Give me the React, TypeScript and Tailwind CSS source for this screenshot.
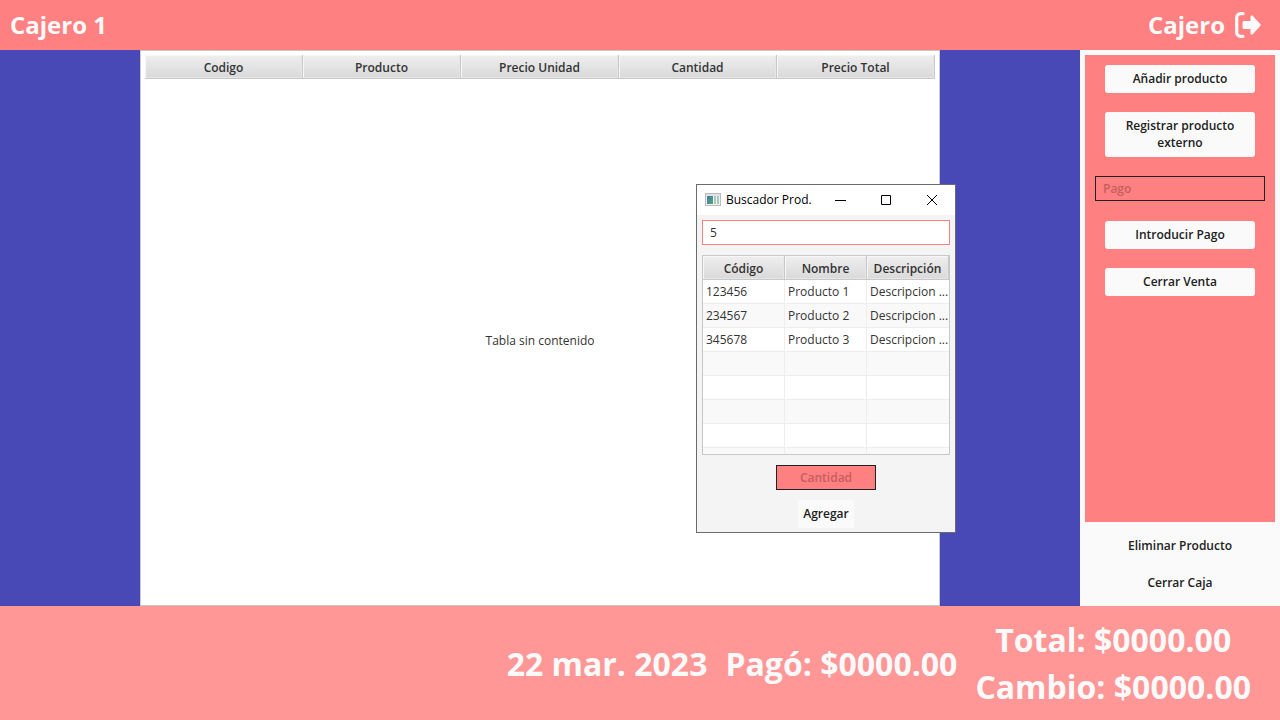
import React from "react";

const saleColumns = ["Codigo", "Producto", "Precio Unidad", "Cantidad", "Precio Total"];

const products = [
  ["123456", "Producto 1", "Descripcion ..."],
  ["234567", "Producto 2", "Descripcion ..."],
  ["345678", "Producto 3", "Descripcion ..."],
  ["", "", ""],
  ["", "", ""],
  ["", "", ""],
  ["", "", ""],
  ["", "", ""],
];

const headCell =
  "h-6 border-r border-b border-[#c8c8c8] bg-linear-to-b from-[#efefef] to-[#d9d9d9] px-0 pt-[2px] pb-0 text-center font-semibold text-[#333333] shadow-[inset_1px_1px_0_#f6f6f6,inset_-1px_-1px_0_#e6e6e6]";

const panelButton =
  "w-[150px] rounded-[3px] bg-[#fafafa] px-2 pb-[2px] text-center leading-[17px] font-semibold text-[#212121]";

function LogoutIcon() {
  return (
    <svg viewBox="0 0 26 26" className="size-[26px]" aria-hidden="true">
      <path d="M8 1.700H5.600A3.900 3.900 0 0 0 1.700 5.600v14.800A3.900 3.900 0 0 0 5.600 24.300H8" fill="none" stroke="#fafafa" strokeWidth="3.200" strokeLinecap="round" />
      <path d="M9.200 8.900h6.300V4.700c0-1.200 1.300-1.700 2.200-.9l7.600 8.100c.6.600.6 1.500 0 2.100l-7.600 8.200c-.9.800-2.200.2-2.200-.9V17H9.200c-.9 0-1.600-.7-1.600-1.600v-4.900c0-.9.700-1.600 1.600-1.600z" fill="#fafafa" />
    </svg>
  );
}

function AppIcon() {
  return (
    <svg viewBox="0 0 16 14" className="h-[14px] w-4" aria-hidden="true">
      <defs>
        <linearGradient id="pane" x1="0" y1="0" x2="1" y2="1">
          <stop offset="0" stopColor="#4a78a8" />
          <stop offset="1" stopColor="#4fa876" />
        </linearGradient>
      </defs>
      <rect x="0.500" y="0.500" width="15" height="12" fill="#f1f1f1" stroke="#b9bcbf" />
      <rect x="1" y="1" width="14" height="2" fill="#dfe3e6" />
      <rect x="2" y="3" width="6" height="8" fill="url(#pane)" />
      <rect x="9" y="3" width="2" height="8" fill="#a9c9bd" />
      <rect x="12" y="3" width="2" height="8" fill="#a9c9bd" />
    </svg>
  );
}

function SearchWindow() {
  return (
    <section
      aria-label="Buscador Prod."
      className="absolute top-[184px] left-[696px] w-[260px] border border-[#6b6b6b] bg-[#f4f4f4]"
    >
      <div className="flex h-[30px] items-center bg-white pl-2 text-black">
        <AppIcon />
        <h2 className="flex-1 pl-[5px] whitespace-nowrap">Buscador Prod.</h2>
        <button aria-label="Minimizar" className="flex h-full w-[45px] items-center justify-center">
          <svg viewBox="0 0 11 11" className="size-[11px]" stroke="#000"><path d="M0 5.500h11" /></svg>
        </button>
        <button aria-label="Maximizar" className="flex h-full w-[46px] items-center justify-center">
          <svg viewBox="0 0 10 10" className="size-[10px]" stroke="#000" fill="none"><path d="M.5.5h9v9h-9z" /></svg>
        </button>
        <button aria-label="Cerrar" className="flex h-full w-[46px] items-center justify-center">
          <svg viewBox="0 0 10 10" className="size-[10px]" stroke="#000"><path d="M0 0l10 10M10 0L0 10" /></svg>
        </button>
      </div>
      <div className="flex flex-col items-center px-[5px] pt-[5px] pb-1">
        <input
          aria-label="Buscar"
          defaultValue="5"
          className="h-[25px] w-full border border-[#ff8080] bg-white px-[7px] text-[#333333] outline-none"
        />
        <div className="mt-[10px] h-[200px] w-full overflow-hidden border border-[#c8c8c8] bg-white">
          <table className="w-full table-fixed border-separate border-spacing-0">
            <thead>
              <tr>
                {["Código", "Nombre", "Descripción"].map((c) => (
                  <th key={c} className={headCell}>{c}</th>
                ))}
              </tr>
            </thead>
            <tbody>
              {products.map((row, i) => (
                <tr key={i} className="odd:bg-white even:bg-[#f9f9f9]">
                  {row.map((cell, j) => (
                    <td key={j} className="h-6 border-r border-b border-[#ededed] py-0 pl-[3px] whitespace-nowrap text-[#333333] last:border-r-0">
                      {cell}
                    </td>
                  ))}
                </tr>
              ))}
            </tbody>
          </table>
        </div>
        <input
          aria-label="Cantidad"
          placeholder="Cantidad"
          className="mt-[10px] h-[25px] w-[100px] border border-[#212121] bg-[#ff8080] text-center font-semibold outline-none placeholder:text-[#c45f61]"
        />
        <button className="mt-[10px] h-7 w-14 rounded-[3px] bg-[#fafafa] font-semibold text-[#212121]">Agregar</button>
      </div>
    </section>
  );
}

export default function App() {
  return (
    <div className="relative flex min-h-screen flex-col bg-[#4848b7] font-['Open_Sans','Noto_Sans',sans-serif] text-[12px] leading-4">
      <header className="flex h-[50px] items-center justify-between bg-[#ff8080] pr-[19px] pl-[10px] text-[24px] leading-8 font-bold text-[#fafafa]">
        <h1>Cajero 1</h1>
        <button className="flex items-center gap-[10px]">
          Cajero
          <LogoutIcon />
        </button>
      </header>

      <main className="flex flex-1">
        <div className="flex flex-1 px-[140px]">
          <div className="flex flex-1 flex-col border border-[#c8c8c8] bg-white p-1">
            <table className="w-full table-fixed border-separate border-spacing-0">
              <thead>
                <tr>
                  {saleColumns.map((c) => (
                    <th key={c} className={headCell}>{c}</th>
                  ))}
                </tr>
              </thead>
            </table>
            <p className="flex flex-1 items-center justify-center pt-[2px] text-[#333333]">Tabla sin contenido</p>
          </div>
        </div>

        <aside className="flex w-[200px] flex-col bg-[#fafafa] px-[5px] pt-[5px]">
          <div className="flex flex-1 flex-col items-center bg-[#ff8080] px-[10px] pt-[10px]">
            <button className={`${panelButton} h-7`}>Añadir producto</button>
            <button className={`${panelButton} mt-[19px] h-[45px]`}>Registrar producto externo</button>
            <input
              aria-label="Pago"
              placeholder="Pago"
              className="mt-[19px] h-[25px] w-full border border-[#212121] bg-transparent px-[7px] font-semibold outline-none placeholder:text-[#c45f61]"
            />
            <button className={`${panelButton} mt-5 h-7`}>Introducir Pago</button>
            <button className={`${panelButton} mt-[19px] h-7`}>Cerrar Venta</button>
          </div>
          <div className="flex flex-col items-center gap-[9px] pt-[10px] pb-[9px]">
            <button className={`${panelButton} h-7`}>Eliminar Producto</button>
            <button className={`${panelButton} h-7`}>Cerrar Caja</button>
          </div>
        </aside>
      </main>

      <footer className="flex h-[114px] items-center justify-end gap-[18px] bg-[#ff9797] pr-[29px] text-[32px] leading-[47px] font-bold whitespace-nowrap text-[#fafafa]">
        <p>22 mar. 2023</p>
        <p>Pagó: $0000.00</p>
        <div className="text-center">
          <p>Total: $0000.00</p>
          <p>Cambio: $0000.00</p>
        </div>
      </footer>

      <SearchWindow />
    </div>
  );
}
